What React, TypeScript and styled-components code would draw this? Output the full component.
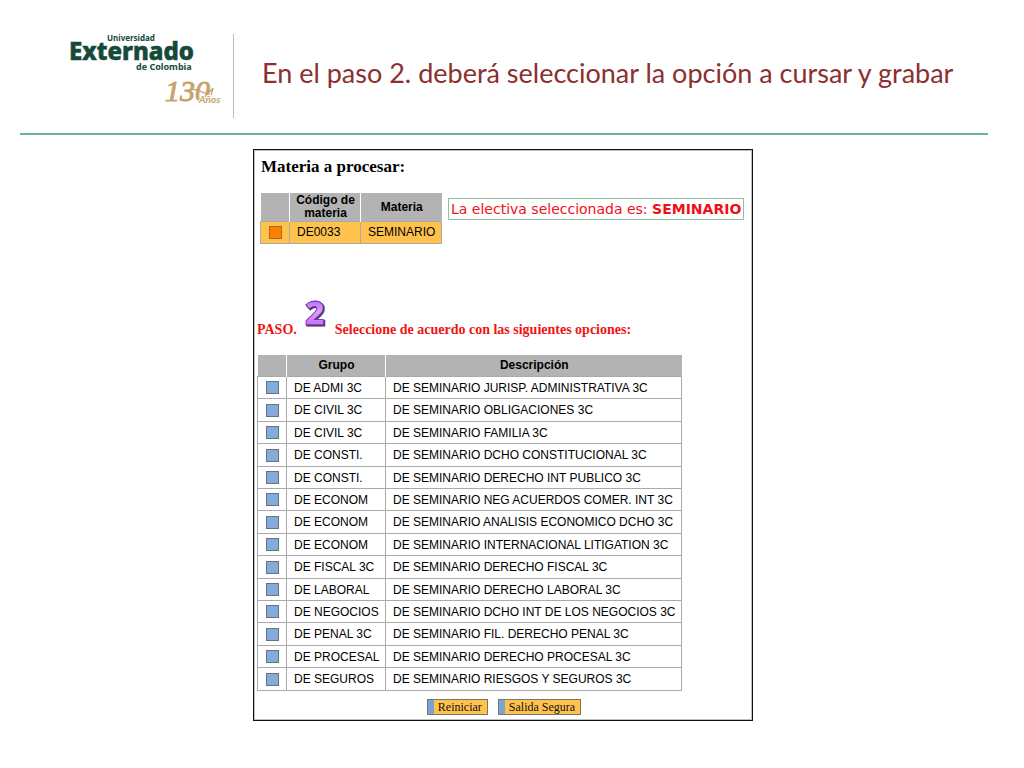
import React from "react";
import styled, { createGlobalStyle } from "styled-components";

const GlobalStyle = createGlobalStyle`
  * { box-sizing: border-box; }
  body { margin: 0; background: #fff; color: #000; font-family: "Liberation Sans", Arial, sans-serif; }
`;

const Header = styled.header`
  display: flex;
  margin: 0 36px 0 20px;
  padding: 34px 0 15px 48px;
  border-bottom: 2px solid #6fb58f;
`;
const Brand = styled.div`
  flex: none;
  width: 166px;
  height: 84px;
  border-right: 1px solid #bdbdbd;
`;
const BrandMark = styled.svg`
  display: block;
  width: 160px;
  height: 80px;
  overflow: visible;
`;
const Title = styled.h1`
  margin: 0;
  padding: 22px 0 0 28px;
  font: 400 27px/34px Lato, sans-serif;
  color: #8c2f30;
`;
const Main = styled.main`
  padding: 14px 18px 40px 0;
`;
const Panel = styled.section`
  width: 100%;
  max-width: 500px;
  margin: 0 auto;
  padding: 6px 3px 5px;
  border: 1px solid #111;
  outline: 1px solid #00000040;
  outline-offset: -2px;
`;
const PanelTitle = styled.h2`
  margin: 0 0 15px 4px;
  font: 700 17px/22px "Liberation Serif", "Times New Roman", serif;
`;
const Summary = styled.div`
  display: flex;
  align-items: flex-start;
  gap: 6px;
  padding-left: 3px;
`;
const Table = styled.table`
  border-collapse: collapse;
  font-size: 12px;
  line-height: 13px;
  white-space: nowrap;
`;
const Head = styled.th<{ $w: number; $h: number }>`
  width: ${(p) => p.$w}px;
  height: ${(p) => p.$h}px;
  padding: 1px 0 0 1px;
  background: #b3b3b3;
  white-space: normal;
  & + & { border-left: 1px solid #fff; }
`;
const Row = styled.tr<{ $selected?: boolean }>`
  height: 22px;
  background: ${(p) => (p.$selected ? "#ffc34d" : "#fff")};
  &:nth-child(5n + 2), &:nth-child(5n + 4) { height: 23px; }
`;
const Cell = styled.td<{ $center?: boolean }>`
  padding: ${(p) => (p.$center ? "0" : "1px 0 0 7px")};
  text-align: ${(p) => (p.$center ? "center" : "left")};
  border: 1px solid #aaa;
`;
const Pick = styled.input`
  appearance: none;
  display: block;
  width: 13px;
  height: 13px;
  margin: 0 auto;
  border: 1px solid #66717f;
  background: #84abdc;
  &:checked { background: #ff8000; border-color: #a8692a; }
`;
const Notice = styled.p`
  margin: 5px 0 0;
  padding: 0 2px;
  border: 1px solid #8cc39b;
  font: 14px/20px "DejaVu Sans", Verdana, sans-serif;
  color: #f01018;
  white-space: nowrap;
`;
const Step = styled.h3`
  display: flex;
  align-items: flex-end;
  margin: 54px 0 16px;
  font: 700 14px/18px "Liberation Serif", "Times New Roman", serif;
  color: #f01414;
`;
const StepNumber = styled.svg`
  flex: none;
  width: 24px;
  height: 32px;
  margin: 0 6px 9px 8px;
  overflow: visible;
`;
const Actions = styled.div`
  display: flex;
  justify-content: center;
  gap: 10px;
  padding: 8px 0 0 2px;
`;
const Action = styled.button`
  height: 16px;
  padding: 0 5px 0 10px;
  border: 1px solid #77776a;
  background: linear-gradient(to right, #7ba4d6 6px, #ffc34d 6px);
  color: #111;
  font: 12px/14px "Liberation Serif", "Times New Roman", serif;
`;

const groups: [string, string][] = [
  ["DE ADMI 3C", "DE SEMINARIO JURISP. ADMINISTRATIVA 3C"],
  ["DE CIVIL 3C", "DE SEMINARIO OBLIGACIONES 3C"],
  ["DE CIVIL 3C", "DE SEMINARIO FAMILIA 3C"],
  ["DE CONSTI.", "DE SEMINARIO DCHO CONSTITUCIONAL 3C"],
  ["DE CONSTI.", "DE SEMINARIO DERECHO INT PUBLICO 3C"],
  ["DE ECONOM", "DE SEMINARIO NEG ACUERDOS COMER. INT 3C"],
  ["DE ECONOM", "DE SEMINARIO ANALISIS ECONOMICO DCHO 3C"],
  ["DE ECONOM", "DE SEMINARIO INTERNACIONAL LITIGATION 3C"],
  ["DE FISCAL 3C", "DE SEMINARIO DERECHO FISCAL 3C"],
  ["DE LABORAL", "DE SEMINARIO DERECHO LABORAL 3C"],
  ["DE NEGOCIOS", "DE SEMINARIO DCHO INT DE LOS NEGOCIOS 3C"],
  ["DE PENAL 3C", "DE SEMINARIO FIL. DERECHO PENAL 3C"],
  ["DE PROCESAL", "DE SEMINARIO DERECHO PROCESAL 3C"],
  ["DE SEGUROS", "DE SEMINARIO RIESGOS Y SEGUROS 3C"],
];

function Logo() {
  return (
    <BrandMark viewBox="0 0 160 80" role="img" aria-label="Universidad Externado de Colombia, 130 Años">
      <g fill="#15493a" fontFamily="'Noto Sans', sans-serif" fontWeight="700">
        <text x="39" y="7" fontSize="8">Universidad</text>
        <text x="1" y="26" fontSize="24" fontWeight="800" stroke="#15493a" strokeWidth="0.6">Externado</text>
        <text x="68" y="36" fontSize="9">de Colombia</text>
      </g>
      <g fill="#c6a36b" fontStyle="italic">
        <text x="97" y="67" fontSize="30" fontFamily="'Liberation Serif', serif" stroke="#c6a36b" strokeWidth="0.9">130</text>
        <text x="131" y="69" fontSize="10" fontFamily="Lato, sans-serif" fontWeight="700" stroke="#fff" strokeWidth="2" paintOrder="stroke">Años</text>
      </g>
      <path d="M120 57c6-3 10-1 14 1s7 2 11-4l-2 7" fill="none" stroke="#c6a36b" strokeWidth="1.3" />
    </BrandMark>
  );
}

export default function App() {
  return (
    <>
      <GlobalStyle />
      <Header>
        <Brand><Logo /></Brand>
        <Title>En el paso 2. deberá seleccionar la opción a cursar y grabar</Title>
      </Header>
      <Main>
        <Panel>
          <PanelTitle>Materia a procesar:</PanelTitle>
          <Summary>
            <Table>
              <thead>
                <tr>
                  <Head $w={29} $h={28} />
                  <Head $w={71} $h={28}>Código de materia</Head>
                  <Head $w={81} $h={28}>Materia</Head>
                </tr>
              </thead>
              <tbody>
                <Row $selected>
                  <Cell $center><Pick type="radio" name="materia" aria-label="SEMINARIO" defaultChecked /></Cell>
                  <Cell>DE0033</Cell>
                  <Cell>SEMINARIO</Cell>
                </Row>
              </tbody>
            </Table>
            <Notice>La electiva seleccionada es: <b>SEMINARIO</b></Notice>
          </Summary>
          <Step>
            PASO.
            <StepNumber viewBox="0 0 24 32" role="img" aria-label="2">
              <defs>
                <linearGradient id="violet" x1="0" y1="0" x2="0" y2="1">
                  <stop offset="0" stopColor="#9a3df0" />
                  <stop offset="0.5" stopColor="#d9a0ff" />
                  <stop offset="1" stopColor="#b04df5" />
                </linearGradient>
              </defs>
              <g fontFamily="'Open Sans', sans-serif" fontWeight="800" fontSize="34">
                <text x="1" y="28" fill="#4b3a55" stroke="#4b3a55">2</text>
                <text x="0" y="27" fill="url(#violet)" stroke="#6a1fb0" strokeWidth="0.8">2</text>
              </g>
            </StepNumber>
            Seleccione de acuerdo con las siguientes opciones:
          </Step>
          <Table>
            <thead>
              <tr>
                <Head $w={29} $h={22} />
                <Head $w={99} $h={22}>Grupo</Head>
                <Head $w={296} $h={22}>Descripción</Head>
              </tr>
            </thead>
            <tbody>
              {groups.map(([group, description]) => (
                <Row key={description}>
                  <Cell $center><Pick type="radio" name="grupo" aria-label={description} /></Cell>
                  <Cell>{group}</Cell>
                  <Cell>{description}</Cell>
                </Row>
              ))}
            </tbody>
          </Table>
          <Actions>
            <Action type="button">Reiniciar</Action>
            <Action type="button">Salida Segura</Action>
          </Actions>
        </Panel>
      </Main>
    </>
  );
}
